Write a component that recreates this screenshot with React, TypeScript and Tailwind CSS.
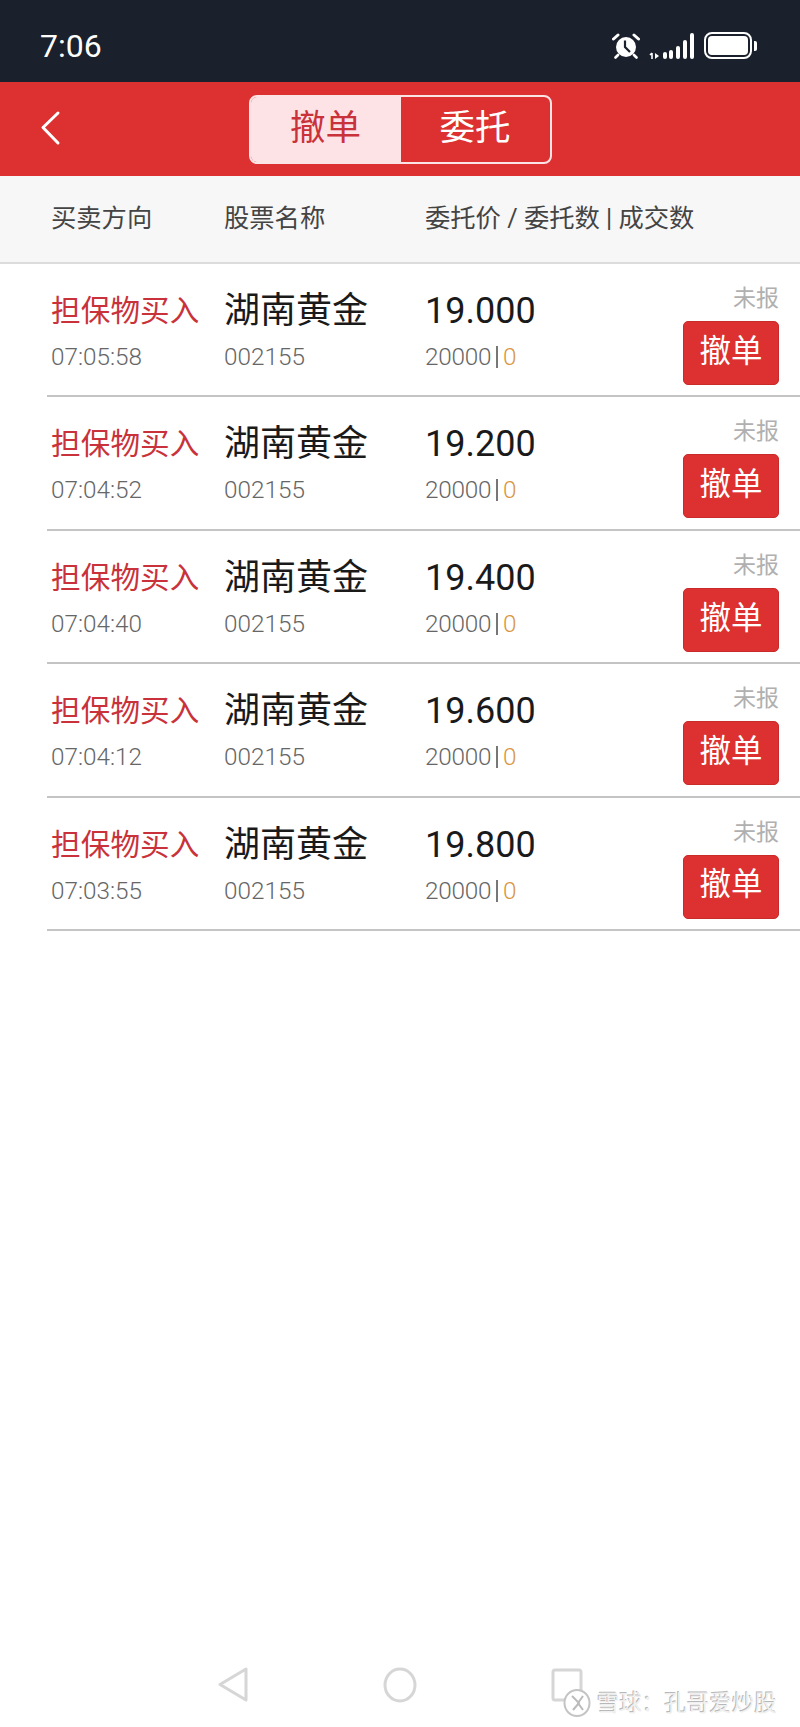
import React from "react";

const rows = [
  { time: "07:05:58", price: "19.000" },
  { time: "07:04:52", price: "19.200" },
  { time: "07:04:40", price: "19.400" },
  { time: "07:04:12", price: "19.600" },
  { time: "07:03:55", price: "19.800" },
];

const font = { fontFamily: 'Roboto, "Noto Sans CJK SC", sans-serif' };

function Row({ time, price }: { time: string; price: string }) {
  return (
    <div className="ml-[47px] flex h-[133.4px] border-b-2 border-[#c4c4c4] pl-[4px] pr-[21px]">
      <div className="w-[173px] pt-[27px]">
        <div className="h-[40px] text-[29.6px] leading-[40px] tracking-[0.1px] text-[#c9323a]">担保物买入</div>
        <div className="mt-[10px] h-[32px] text-[24.3px] leading-[32px] font-light text-[#666666]">{time}</div>
      </div>
      <div className="w-[201px] pt-[27px]">
        <div className="h-[40px] text-[36px] leading-[40px] text-[#1a1a1a]">湖南黄金</div>
        <div className="mt-[10px] h-[32px] text-[24.3px] leading-[32px] font-light text-[#666666]">002155</div>
      </div>
      <div className="flex-1 pt-[27px]">
        <div className="h-[40px] text-[36px] leading-[40px] text-[#1a1a1a]">{price}</div>
        <div className="mt-[10px] flex h-[32px] items-center text-[24.3px] leading-[32px] font-light tracking-[-0.2px] text-[#666666]">
          <span>20000</span>
          <span className="mx-[5px] h-[22px] w-[1.5px] bg-[#777777]"></span>
          <span className="text-[#d9963f]">0</span>
        </div>
      </div>
      <div className="flex w-[96px] flex-col items-end pt-[19px]">
        <div className="h-[32px] text-[23px] leading-[32px] text-[#b0b0b0]">未报</div>
        <div className="mt-[6px] flex h-[64px] w-[96px] items-center justify-center rounded-[5px] border border-[#c92b2b] bg-[#dd3030] pb-[3px] text-[31.5px] text-white">
          撤单
        </div>
      </div>
    </div>
  );
}

export default function App() {
  return (
    <div className="relative flex h-[1727px] w-[800px] flex-col overflow-hidden bg-white" style={font}>
      <div className="flex h-[82px] items-start justify-between bg-[#1a202c] pl-[40px] pr-[43px] pt-[30px]">
        <span className="text-[32px] leading-[32px] text-white">7:06</span>
        <div className="flex items-end pt-[2px]">
          <svg width="28" height="26" viewBox="0 0 28 26" className="mr-[9px]">
            <circle cx="14" cy="14" r="10" fill="white" />
            <path d="M13 7.5V14L18 19" fill="none" stroke="#1a202c" strokeWidth="2.2" />
            <path d="M1.5 6 L6 2 M26.5 6 L22 2" stroke="white" strokeWidth="3" strokeLinecap="round" />
            <path d="M6 22 L3.5 24.5 M22 22 L24.5 24.5" stroke="white" strokeWidth="2.6" strokeLinecap="round" />
          </svg>
          <svg width="45" height="26" viewBox="0 0 45 26" className="mr-[10px]">
            <path d="M3 20 L3 26 M1 22 L3 20" fill="none" stroke="white" strokeWidth="1.6" />
            <path d="M6 20 L6 26 L10 23 Z" fill="white" />
            <rect x="14" y="19" width="4" height="7" rx="2" fill="white" />
            <rect x="20" y="17" width="4" height="9" rx="2" fill="white" />
            <rect x="27" y="13" width="4" height="13" rx="2" fill="white" />
            <rect x="34" y="7" width="4" height="19" rx="2" fill="white" />
            <rect x="41" y="0" width="4" height="26" rx="2" fill="white" />
          </svg>
          <div className="flex items-center">
            <div className="flex h-[27px] w-[48px] items-center justify-center rounded-[8px] border-2 border-white p-[2px]">
              <div className="h-full w-full rounded-[4px] bg-white"></div>
            </div>
            <div className="ml-[2px] h-[10px] w-[3px] rounded-r-[2px] bg-white"></div>
          </div>
        </div>
      </div>

      <div className="relative flex h-[94px] items-center justify-center bg-[#dd3030]">
        <svg width="24" height="36" viewBox="0 0 24 36" className="absolute left-[38px] top-[28px]">
          <path d="M20 3 L5 17.5 L20 33" fill="none" stroke="white" strokeWidth="3" strokeLinecap="round" strokeLinejoin="round" />
        </svg>
        <div className="flex h-[69px] w-[303px] overflow-hidden rounded-[8px] border-2 border-[#fbe4e6]">
          <div className="flex w-[150px] items-center justify-center bg-[#fde3e6] text-[35.5px] text-[#c9323a]">撤单</div>
          <div className="flex flex-1 items-center justify-center text-[35.5px] text-white">委托</div>
        </div>
      </div>

      <div className="flex h-[88px] items-center border-b-2 border-[#dcdcdc] bg-[#f7f7f7] pl-[51px] text-[25.3px] text-[#444444]">
        <div className="w-[173px]">买卖方向</div>
        <div className="w-[201px]">股票名称</div>
        <div className="whitespace-pre">委托价 / 委托数 | 成交数</div>
      </div>

      <div>
        {rows.map((r) => (
          <Row key={r.time} time={r.time} price={r.price} />
        ))}
      </div>

      <div className="mt-auto flex h-[87px] items-start pl-[217px] pt-[27px]">
        <svg width="32" height="36" viewBox="0 0 32 36" className="mr-[134px]">
          <path d="M29 2 L29 33 L3 17.5 Z" fill="none" stroke="#d6d6d6" strokeWidth="3" strokeLinejoin="round" />
        </svg>
        <svg width="34" height="38" viewBox="0 0 34 38" className="mr-[134px]">
          <ellipse cx="17" cy="18" rx="15" ry="16" fill="none" stroke="#d6d6d6" strokeWidth="3" />
        </svg>
        <svg width="32" height="36" viewBox="0 0 32 36">
          <rect x="2" y="3" width="28" height="30" rx="2" fill="none" stroke="#d6d6d6" strokeWidth="3" />
        </svg>
      </div>

      <div className="absolute left-[563px] top-[1689px] flex items-center">
        <svg width="28" height="28" viewBox="0 0 28 28" className="mr-[6px]">
          <ellipse cx="14" cy="14" rx="12.5" ry="13" fill="white" stroke="#c4c4c4" strokeWidth="2" />
          <path d="M9 7 L16 14 L10 21 M20 7 L15 14 L20 21" fill="none" stroke="#bbbbbb" strokeWidth="2" />
        </svg>
        <span className="text-[22.5px] leading-none text-[#f0f0f0] [text-shadow:-1px_-1px_0_#b8b8b8]">雪球：孔哥爱炒股</span>
      </div>
    </div>
  );
}
